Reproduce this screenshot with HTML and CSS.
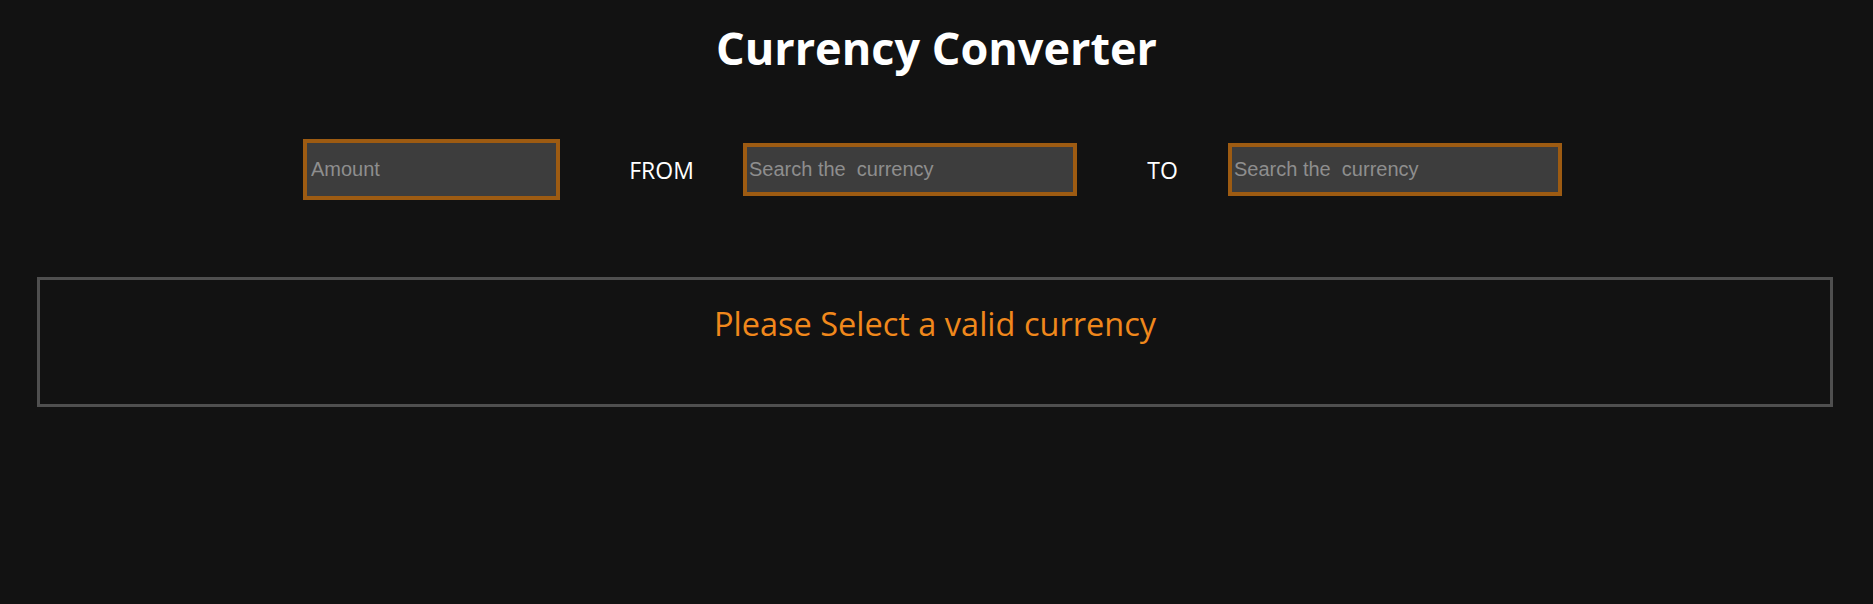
FILE: index.html
```html
<!DOCTYPE html>
<html lang="en">
<head>
<meta charset="utf-8">
<title>Currency Converter</title>
<link rel="stylesheet" href="styles.css">
</head>
<body>
  <h1 class="title">Currency Converter</h1>
  <div class="row">
    <input class="field field-amount" type="text" placeholder="Amount">
    <span class="label label-from">FROM</span>
    <input class="field field-currency" type="text" placeholder="Search the  currency">
    <span class="label label-to">TO</span>
    <input class="field field-currency" type="text" placeholder="Search the  currency">
  </div>
  <div class="result">
    <p class="message">Please Select a valid currency</p>
  </div>
</body>
</html>
```

FILE: styles.css
```css
html, body {
  background: #121212;
}
body {
  margin: 8px;
  color: #ffffff;
  font-family: "Open Sans", "Noto Sans", sans-serif;
}
.title {
  margin: 12px 0 63px;
  font-size: 45px;
  line-height: 56px;
  font-weight: 700;
  text-align: center;
  color: #ffffff;
}
.row {
  display: flex;
  align-items: center;
  justify-content: center;
  padding-right: 8px;
}
.field {
  box-sizing: border-box;
  border: 4px solid #9d5b12;
  background: #3d3d3d;
  color: #ffffff;
  font-family: "Liberation Sans", Arial, sans-serif;
  font-size: 20px;
  padding: 1px 2px;
  outline: none;
  margin: 0;
}
.field::placeholder {
  color: #8e8e8e;
}
.field-amount {
  width: 257px;
  height: 61px;
  padding-left: 4px;
}
.field-currency {
  width: 334px;
  height: 53px;
}
.label {
  font-size: 23px;
  color: #ffffff;
  text-align: center;
}
.label-from {
  width: 163px;
  padding-left: 20px;
}
.label-to {
  width: 131px;
  padding-left: 20px;
}
.result {
  box-sizing: border-box;
  margin: 77px 0 0 29px;
  width: 1796px;
  height: 130px;
  border: 3px solid #4f4f4f;
  text-align: center;
}
.message {
  margin: 0;
  padding-top: 24px;
  font-size: 32.5px;
  line-height: 40px;
  color: #f0881c;
}
```
